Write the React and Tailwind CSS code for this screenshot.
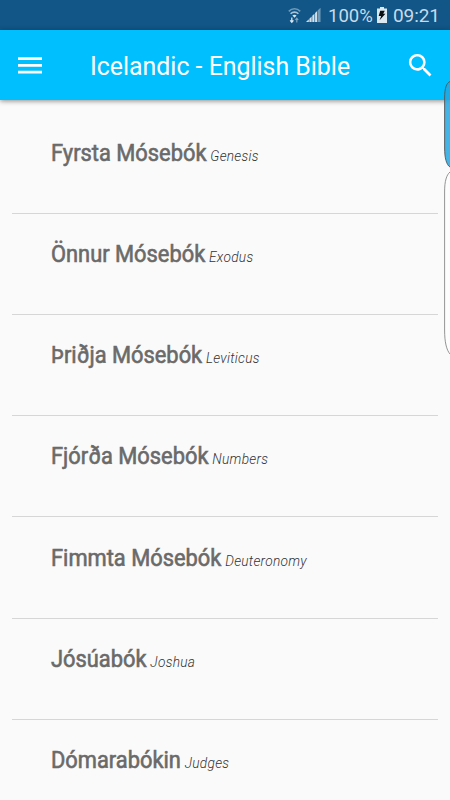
import React from 'react'

const BOOKS = [
  { name: 'Fyrsta Mósebók', english: 'Genesis' },
  { name: 'Önnur Mósebók', english: 'Exodus' },
  { name: 'Þriðja Mósebók', english: 'Leviticus' },
  { name: 'Fjórða Mósebók', english: 'Numbers' },
  { name: 'Fimmta Mósebók', english: 'Deuteronomy' },
  { name: 'Jósúabók', english: 'Joshua' },
  { name: 'Dómarabókin', english: 'Judges' },
]

function WifiIcon() {
  return (
    <svg width="13" height="17" viewBox="0 0 13 17" fill="none">
      <path d="M.8 4.4C4 .8 9 .8 12.2 4.4" stroke="#6f9ab8" strokeWidth="1.6" />
      <path d="M2.6 6.8C4.8 4.6 8.2 4.6 10.4 6.8" stroke="#a9c3d6" strokeWidth="1.6" />
      <path d="M4.4 8.6C5.6 7.5 7.4 7.5 8.6 8.6L6.5 10.8Z" fill="#dbe6ee" />
      <path d="M3.8 10.5V15M2.2 13.3L3.8 15.2L5.4 13.3" stroke="#dbe6ee" strokeWidth="1.3" />
      <path d="M8.8 15.5V11.4M7.4 13L8.8 11.2L10.2 13" stroke="#7ea3be" strokeWidth="1.2" />
    </svg>
  )
}

function SignalIcon() {
  return (
    <svg width="15" height="16" viewBox="0 0 16 16">
      <path d="M0 15.5L3 12.5V15.5Z M3.6 12L6 9.6V15.5H3.6Z M6.7 8.9L9 6.6V15.5H6.7Z M9.7 5.9L11.9 3.7V15.5H9.7Z" fill="#d3e0ea" />
      <path d="M12.4 3.2L15.5 0.2V15.5H12.4Z" fill="#6f9ab8" />
    </svg>
  )
}

function BatteryIcon() {
  return (
    <svg width="10" height="16" viewBox="0 0 10 16">
      <path d="M3 0H7V1.6H10V16H0V1.6H3Z" fill="#dbe8f1" />
      <path d="M3.2 3.7H7.8L6.2 6.8H8.4L2.6 13.2L4.1 9H1.7Z" fill="#0b0f12" />
    </svg>
  )
}

function StatusBar() {
  return (
    <div className="flex h-[30px] shrink-0 items-center justify-end bg-[#115686] pr-[10px] text-[19px] leading-[30px] text-[#c9dbe8]">
      <WifiIcon />
      <span className="ml-[5px]"><SignalIcon /></span>
      <span className="ml-[7px] w-[45px] whitespace-nowrap pt-[2px] text-[18.5px]">100%</span>
      <span className="ml-[4px]"><BatteryIcon /></span>
      <span className="ml-[6px] w-[47px] whitespace-nowrap pt-[2px] tracking-[-0.1px]">09:21</span>
    </div>
  )
}

function AppBar() {
  return (
    <header className="relative z-10 flex h-[70px] shrink-0 items-center bg-[#00bfff] pr-[14px] pl-[18px] text-white shadow-[0_1px_5px_rgba(0,0,0,0.45)]">
      <button aria-label="Menu">
        <svg width="24" height="17" viewBox="0 0 24 17" fill="white">
          <path d="M0 .3H24V3H0Z M0 7.1H24V9.8H0Z M0 13.8H24V16.5H0Z" />
        </svg>
      </button>
      <h1 className="ml-12 flex-1 origin-left scale-x-[0.957] whitespace-nowrap pt-[1px] text-[26px] leading-[30px]">Icelandic - English Bible</h1>
      <button aria-label="Search">
        <svg width="31" height="31" viewBox="0 0 24 24" fill="white">
          <path d="M15.5 14h-.79l-.28-.27A6.471 6.471 0 0 0 16 9.5 6.5 6.5 0 1 0 9.5 16c1.61 0 3.09-.59 4.23-1.57l.27.28v.79l5 4.99L20.49 19l-4.99-5zm-6 0C7.01 14 5 11.99 5 9.5S7.01 5 9.5 5 14 7.01 14 9.5 11.99 14 9.5 14z" />
        </svg>
      </button>
    </header>
  )
}

function BookRow({ book }) {
  return (
    <li className="h-[101.25px] border-b border-[#d6d6d6] pt-[25.25px] pl-[38.5px] whitespace-nowrap">
      <div className="origin-left scale-x-[0.95]">
        <span className="text-[23px] leading-[32px] text-[#6a6a6a] [-webkit-text-stroke:0.6px_#6a6a6a]">{book.name}</span>
        <span className="ml-[4px] text-[14.4px] font-light tracking-[0.3px] text-[#333] italic">{book.english}</span>
      </div>
    </li>
  )
}

// Edge panel handles sit over the right side of the screen
function EdgeHandles() {
  return (
    <svg className="absolute top-[80px] right-0 z-20" width="6" height="276" viewBox="0 0 6 276" fill="none">
      <path d="M6 1.5C2.5 3 .6 8 .6 18V68C.6 78 2.5 85 6 87Z" fill="#22a7e0" fillOpacity="0.85" />
      <path d="M6 1.5C2.5 3 .6 8 .6 18V68C.6 78 2.5 85 6 87" stroke="#555" strokeWidth="0.9" />
      <path d="M6 92C2.5 95 .6 101 .6 112V250C.6 262 2.5 270 6 274Z" fill="#fdfdfd" />
      <path d="M6 92C2.5 95 .6 101 .6 112V250C.6 262 2.5 270 6 274" stroke="#888" strokeWidth="0.9" />
    </svg>
  )
}

export default function App() {
  return (
    <div className="relative flex h-[800px] w-[450px] flex-col overflow-hidden bg-[#fafafa] font-['Roboto',sans-serif]">
      <StatusBar />
      <AppBar />
      <ul className="px-3 pt-[12.25px]">
        {BOOKS.map(b => <BookRow key={b.english} book={b} />)}
      </ul>
      <EdgeHandles />
    </div>
  )
}
